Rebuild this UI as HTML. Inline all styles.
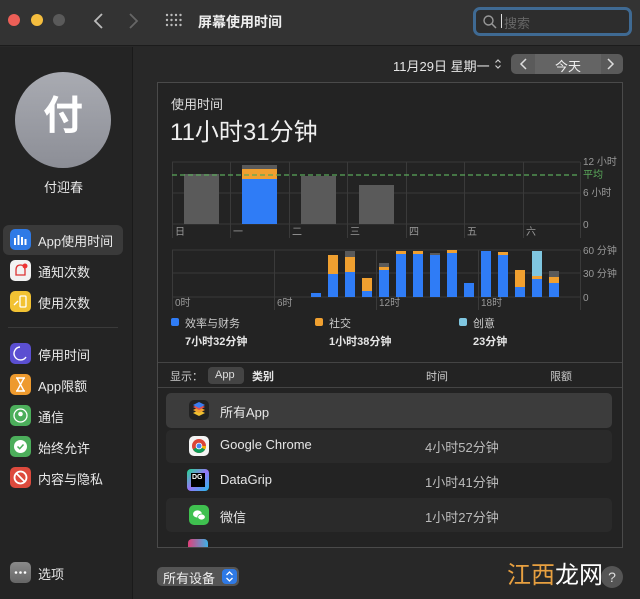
<!DOCTYPE html>
<html><head><meta charset="utf-8"><style>
*{margin:0;padding:0;box-sizing:border-box}
body{width:640px;height:599px;overflow:hidden;background:#282828;font-family:"Liberation Sans","Noto Sans CJK SC",sans-serif;color:#e6e6e6;position:relative}
.a{position:absolute;white-space:nowrap}
.t{font-size:13px}
.s{font-size:11px}
.ic{position:absolute;left:10px;width:21px;height:21px;border-radius:5px}
.mi{position:absolute;left:38px;font-size:13px;color:#e8e8e8}
.row{position:absolute;left:166px;width:446px;border-radius:5px}
</style></head><body>
<!-- title bar -->
<div class="a" style="left:0;top:0;width:640px;height:46px;background:#333;border-bottom:1px solid #1c1c1c"></div>
<div class="a" style="left:8px;top:14px;width:12px;height:12px;border-radius:6px;background:#ec5f57"></div>
<div class="a" style="left:31px;top:14px;width:12px;height:12px;border-radius:6px;background:#f4bd3e"></div>
<div class="a" style="left:53px;top:14px;width:12px;height:12px;border-radius:6px;background:#5a5a5a"></div>
<svg class="a" style="left:90px;top:12px" width="60" height="18"><path d="M12 2 L5 9 L12 16" stroke="#bbb" stroke-width="1.8" fill="none"/><path d="M40 2 L47 9 L40 16" stroke="#666" stroke-width="1.8" fill="none"/></svg>
<svg class="a" style="left:165px;top:13px" width="18" height="14"><g fill="#bbb"><circle cx="2" cy="2" r="1.2"/><circle cx="6.5" cy="2" r="1.2"/><circle cx="11" cy="2" r="1.2"/><circle cx="15.5" cy="2" r="1.2"/><circle cx="2" cy="7" r="1.2"/><circle cx="6.5" cy="7" r="1.2"/><circle cx="11" cy="7" r="1.2"/><circle cx="15.5" cy="7" r="1.2"/><circle cx="2" cy="12" r="1.2"/><circle cx="6.5" cy="12" r="1.2"/><circle cx="11" cy="12" r="1.2"/><circle cx="15.5" cy="12" r="1.2"/></g></svg>
<div class="a" style="left:198px;top:12px;font-size:14px;font-weight:bold;color:#eee">屏幕使用时间</div>
<div class="a" style="left:473px;top:7px;width:159px;height:29px;border:3px solid #3f6a93;border-radius:7px;background:#2d2d2d"></div>
<svg class="a" style="left:482px;top:14px" width="16" height="16"><circle cx="6.5" cy="6.5" r="4.5" stroke="#999" stroke-width="1.4" fill="none"/><path d="M10 10 L14 14" stroke="#999" stroke-width="1.5"/></svg>
<div class="a" style="left:501px;top:14px;width:1px;height:14px;background:#ddd"></div>
<div class="a t" style="left:504px;top:13px;color:#666">搜索</div>
<!-- sidebar -->
<div class="a" style="left:0;top:47px;width:133px;height:552px;background:#242424;border-right:1px solid #1a1a1a"></div>
<div class="a" style="left:15px;top:72px;width:96px;height:96px;border-radius:50%;background:linear-gradient(#a9abb2,#8c8e96)"></div>
<div class="a" style="left:15px;top:92px;width:96px;text-align:center;font-size:40px;line-height:48px;color:#fff;font-weight:bold">付</div>
<div class="a t" style="left:44px;top:177px">付迎春</div>
<div class="a" style="left:3px;top:225px;width:120px;height:30px;border-radius:6px;background:#3a3a3a"></div>
<div class="ic" style="top:229px;background:#2f7ae6"><svg width="21" height="21"><g fill="#fff"><rect x="4" y="9" width="2" height="7"/><rect x="7.5" y="6" width="2" height="10"/><rect x="11" y="8" width="2" height="8"/><rect x="14.5" y="10" width="2" height="6"/></g></svg></div>
<div class="mi" style="top:231px">App使用时间</div>
<div class="ic" style="top:260px;background:#f2f2f2"><svg width="21" height="21"><path d="M6 15 L6 10 Q6 5 10.5 5 Q15 5 15 10 L15 15 Z" fill="none" stroke="#d33" stroke-width="1.3"/><circle cx="15" cy="6" r="2.5" fill="#e33"/></svg></div>
<div class="mi" style="top:262px">通知次数</div>
<div class="ic" style="top:291px;background:#f2c233"><svg width="21" height="21"><rect x="10" y="5" width="6" height="11" rx="1" fill="none" stroke="#fff" stroke-width="1.3"/><path d="M4 14 L8 10" stroke="#fff" stroke-width="1.3"/></svg></div>
<div class="mi" style="top:293px">使用次数</div>
<div class="a" style="left:8px;top:327px;width:110px;height:1px;background:#3a3a3a"></div>
<div class="ic" style="top:343px;background:#5b4fd1"><svg width="21" height="21"><path d="M10 4 A6.5 6.5 0 1 0 16 14" fill="none" stroke="#fff" stroke-width="1.4"/></svg></div>
<div class="mi" style="top:345px">停用时间</div>
<div class="ic" style="top:374px;background:#ee9a2e"><svg width="21" height="21"><path d="M6 4 H15 M6 17 H15 M7 4 L14 17 M14 4 L7 17" stroke="#fff" stroke-width="1.4" fill="none"/></svg></div>
<div class="mi" style="top:376px">App限额</div>
<div class="ic" style="top:405px;background:#4cae5b"><svg width="21" height="21"><circle cx="10.5" cy="10.5" r="6.5" fill="none" stroke="#fff" stroke-width="1.3"/><circle cx="10.5" cy="9" r="2.3" fill="#fff"/></svg></div>
<div class="mi" style="top:407px">通信</div>
<div class="ic" style="top:436px;background:#4cae5b"><svg width="21" height="21"><circle cx="10.5" cy="10.5" r="6.5" fill="#fff"/><path d="M7.5 10.5 L9.7 12.7 L13.5 8.5" stroke="#4cae5b" stroke-width="1.5" fill="none"/></svg></div>
<div class="mi" style="top:438px">始终允许</div>
<div class="ic" style="top:467px;background:#dd4a3d"><svg width="21" height="21"><circle cx="10.5" cy="10.5" r="6" fill="none" stroke="#fff" stroke-width="1.8"/><path d="M6.3 6.3 L14.7 14.7" stroke="#fff" stroke-width="1.8"/></svg></div>
<div class="mi" style="top:469px">内容与隐私</div>
<div class="ic" style="top:562px;background:linear-gradient(#8a8a8a,#666)"><svg width="21" height="21"><g fill="#fff"><circle cx="6" cy="10.5" r="1.3"/><circle cx="10.5" cy="10.5" r="1.3"/><circle cx="15" cy="10.5" r="1.3"/></g></svg></div>
<div class="mi" style="top:564px">选项</div>
<!-- date nav -->
<div class="a t" style="left:393px;top:56px">11月29日 星期一</div>
<svg class="a" style="left:494px;top:58px" width="8" height="12"><path d="M1.5 4.5 L4 2 L6.5 4.5 M1.5 7.5 L4 10 L6.5 7.5" stroke="#ccc" stroke-width="1.2" fill="none"/></svg>
<div class="a" style="left:511px;top:54px;width:112px;height:20px;border-radius:5px;background:#5a5a5a"></div>
<div class="a" style="left:535px;top:54px;width:66px;height:20px;background:#646464"></div>
<svg class="a" style="left:511px;top:54px" width="112" height="20"><path d="M15 5 L10 10 L15 15" stroke="#ddd" stroke-width="1.5" fill="none"/><path d="M97 5 L102 10 L97 15" stroke="#ddd" stroke-width="1.5" fill="none"/></svg>
<div class="a t" style="left:555px;top:56px;color:#eee">今天</div>
<!-- panel -->
<div class="a" style="left:157px;top:82px;width:466px;height:466px;background:#232323;border:1px solid #4a4a4a"></div>
<div class="a t" style="left:171px;top:94px;color:#ddd">使用时间</div>
<div class="a" style="left:170px;top:112px;font-size:24px;color:#f0f0f0">11小时31分钟</div>
<svg class="a" style="left:160px;top:150px" width="462" height="200">
<g stroke="#3a3a3a" stroke-width="1">
<line x1="12" y1="12" x2="420" y2="12"/><line x1="12" y1="74" x2="420" y2="74"/>
<line x1="12" y1="43" x2="420" y2="43"/>
<line x1="12" y1="100" x2="420" y2="100"/><line x1="12" y1="147" x2="420" y2="147"/><line x1="12" y1="123" x2="420" y2="123"/>
<line x1="12.5" y1="12" x2="12.5" y2="88"/><line x1="70.5" y1="12" x2="70.5" y2="88"/><line x1="129.5" y1="12" x2="129.5" y2="88"/><line x1="187.5" y1="12" x2="187.5" y2="88"/><line x1="246.5" y1="12" x2="246.5" y2="88"/><line x1="304.5" y1="12" x2="304.5" y2="88"/><line x1="363.5" y1="12" x2="363.5" y2="88"/><line x1="420.5" y1="12" x2="420.5" y2="88"/>
<line x1="12.5" y1="100" x2="12.5" y2="160"/><line x1="114.5" y1="100" x2="114.5" y2="160"/><line x1="216.5" y1="100" x2="216.5" y2="160"/><line x1="318.5" y1="100" x2="318.5" y2="160"/><line x1="420.5" y1="100" x2="420.5" y2="160"/>
</g>
<rect x="24" y="24" width="35" height="50" fill="#5a5a5a"/>
<rect x="82" y="15" width="35" height="4" fill="#5a5a5a"/>
<rect x="82" y="19" width="35" height="10" fill="#f0a030"/>
<rect x="82" y="29" width="35" height="45" fill="#2f7cf6"/>
<rect x="141" y="26" width="35" height="48" fill="#5a5a5a"/>
<rect x="199" y="35" width="35" height="39" fill="#5a5a5a"/>
<line x1="12" y1="25" x2="420" y2="25" stroke="#5aa85a" stroke-width="1.2" stroke-dasharray="5,3"/>
<g fill="#999" font-size="10" font-family="Liberation Sans,Noto Sans CJK SC,sans-serif">
<text x="15" y="85">日</text><text x="73" y="85">一</text><text x="132" y="85">二</text><text x="190" y="85">三</text><text x="249" y="85">四</text><text x="307" y="85">五</text><text x="366" y="85">六</text>
<text x="423" y="15">12 小时</text><text x="423" y="46">6 小时</text><text x="423" y="78">0</text>
<text x="423" y="104">60 分钟</text><text x="423" y="127">30 分钟</text><text x="423" y="151">0</text>
<text x="15" y="156">0时</text><text x="117" y="156">6时</text><text x="219" y="156">12时</text><text x="321" y="156">18时</text>
</g>
<text x="423" y="28" fill="#5aa85a" font-size="10" font-family="Noto Sans CJK SC,sans-serif">平均</text>
<g>
<rect x="151" y="143" width="10" height="4" fill="#2f7cf6"/>
<rect x="168" y="124" width="10" height="23" fill="#2f7cf6"/><rect x="168" y="105" width="10" height="19" fill="#f0a030"/>
<rect x="185" y="122" width="10" height="25" fill="#2f7cf6"/><rect x="185" y="107" width="10" height="15" fill="#f0a030"/><rect x="185" y="101" width="10" height="6" fill="#5a5a5a"/>
<rect x="202" y="141" width="10" height="6" fill="#2f7cf6"/><rect x="202" y="128" width="10" height="13" fill="#f0a030"/>
<rect x="219" y="120" width="10" height="27" fill="#2f7cf6"/><rect x="219" y="117" width="10" height="3" fill="#f0a030"/><rect x="219" y="113" width="10" height="4" fill="#5a5a5a"/>
<rect x="236" y="104" width="10" height="43" fill="#2f7cf6"/><rect x="236" y="101" width="10" height="3" fill="#f0a030"/>
<rect x="253" y="104" width="10" height="43" fill="#2f7cf6"/><rect x="253" y="101" width="10" height="3" fill="#f0a030"/>
<rect x="270" y="105" width="10" height="42" fill="#2f7cf6"/><rect x="270" y="103" width="10" height="2" fill="#5a5a5a"/>
<rect x="287" y="103" width="10" height="44" fill="#2f7cf6"/><rect x="287" y="100" width="10" height="3" fill="#f0a030"/>
<rect x="304" y="133" width="10" height="14" fill="#2f7cf6"/>
<rect x="321" y="101" width="10" height="46" fill="#2f7cf6"/>
<rect x="338" y="105" width="10" height="42" fill="#2f7cf6"/><rect x="338" y="102" width="10" height="3" fill="#f0a030"/>
<rect x="355" y="137" width="10" height="10" fill="#2f7cf6"/><rect x="355" y="120" width="10" height="17" fill="#f0a030"/>
<rect x="372" y="129" width="10" height="18" fill="#2f7cf6"/><rect x="372" y="126" width="10" height="3" fill="#f0a030"/><rect x="372" y="101" width="10" height="25" fill="#7fc6e0"/>
<rect x="389" y="133" width="10" height="14" fill="#2f7cf6"/><rect x="389" y="127" width="10" height="6" fill="#f0a030"/><rect x="389" y="121" width="10" height="6" fill="#5a5a5a"/>
</g>
</svg>
<div class="a" style="left:171px;top:318px;width:8px;height:8px;border-radius:2px;background:#2f7cf6"></div>
<div class="a s" style="left:185px;top:315px;color:#ccc">效率与财务</div>
<div class="a" style="left:315px;top:318px;width:8px;height:8px;border-radius:2px;background:#f0a030"></div>
<div class="a s" style="left:329px;top:315px;color:#ccc">社交</div>
<div class="a" style="left:459px;top:318px;width:8px;height:8px;border-radius:2px;background:#7fc6e0"></div>
<div class="a s" style="left:473px;top:315px;color:#ccc">创意</div>
<div class="a s" style="left:185px;top:333px;font-weight:bold">7小时32分钟</div>
<div class="a s" style="left:329px;top:333px;font-weight:bold">1小时38分钟</div>
<div class="a s" style="left:473px;top:333px;font-weight:bold">23分钟</div>
<div class="a" style="left:158px;top:362px;width:464px;height:1px;background:#444"></div>
<div class="a" style="left:158px;top:387px;width:464px;height:1px;background:#444"></div>
<div class="a s" style="left:170px;top:368px;color:#ccc">显示：</div>
<div class="a" style="left:208px;top:367px;width:36px;height:17px;border-radius:4px;background:#444"></div>
<div class="a s" style="left:215px;top:369px;color:#ddd">App</div>
<div class="a s" style="left:252px;top:368px;font-weight:bold">类别</div>
<div class="a s" style="left:426px;top:368px;color:#ccc">时间</div>
<div class="a s" style="left:550px;top:368px;color:#ccc">限额</div>
<div class="row" style="top:393px;height:35px;background:#3c3c3c"></div>
<div class="row" style="top:430px;height:33px;background:#2a2a2a"></div>
<div class="row" style="top:498px;height:34px;background:#2a2a2a"></div>
<div class="a" style="left:189px;top:400px;width:20px;height:20px;border-radius:5px;background:#222"><svg width="20" height="20"><path d="M10 16 L4 13 L10 10 L16 13Z" fill="#f0c030"/><path d="M10 13 L4 10 L10 7 L16 10Z" fill="#f0a030"/><path d="M10 10 L4 7 L10 4 L16 7Z" fill="#e05050"/><path d="M10 8 L4 5 L10 2 L16 5Z" fill="#3d7cf0"/></svg></div>
<div class="a t" style="left:220px;top:402px">所有App</div>
<div class="a" style="left:189px;top:436px;width:20px;height:20px;border-radius:5px;background:#f4f4f4"><svg width="20" height="20"><circle cx="10" cy="10" r="7" fill="#db4437"/><path d="M10 10 L16.1 13.5 A7 7 0 0 1 4 13.5Z" fill="#0f9d58"/><path d="M10 10 L17 10 A7 7 0 0 1 16.1 13.5Z" fill="#f4b400"/><circle cx="10" cy="10" r="3.3" fill="#fff"/><circle cx="10" cy="10" r="2.5" fill="#4285f4"/></svg></div>
<div class="a t" style="left:220px;top:437px">Google Chrome</div>
<div class="a t" style="left:425px;top:437px;color:#bbb">4小时52分钟</div>
<div class="a" style="left:187px;top:469px;width:22px;height:22px;border-radius:4px;background:linear-gradient(135deg,#22d88f,#9775f8,#23bbea)"></div>
<div class="a" style="left:191px;top:473px;width:14px;height:14px;background:#000;color:#fff;font-size:7px;font-weight:bold;padding:1px">DG</div>
<div class="a t" style="left:220px;top:472px">DataGrip</div>
<div class="a t" style="left:425px;top:472px;color:#bbb">1小时41分钟</div>
<div class="a" style="left:189px;top:505px;width:20px;height:20px;border-radius:5px;background:#3fc04f"><svg width="20" height="20"><ellipse cx="8.5" cy="9" rx="4.5" ry="3.6" fill="#fff"/><ellipse cx="12.5" cy="12" rx="3.8" ry="3" fill="#fff" stroke="#3fc04f" stroke-width=".8"/></svg></div>
<div class="a t" style="left:220px;top:507px">微信</div>
<div class="a t" style="left:425px;top:507px;color:#bbb">1小时27分钟</div>
<div class="a" style="left:188px;top:539px;width:20px;height:8px;background:linear-gradient(90deg,#e0407a,#3db0e6);border-radius:4px 4px 0 0"></div>
<!-- bottom -->
<div class="a" style="left:157px;top:567px;width:82px;height:19px;border-radius:5px;background:#555"></div>
<div class="a t" style="left:163px;top:568px;color:#eee">所有设备</div>
<div class="a" style="left:222px;top:569px;width:15px;height:15px;border-radius:4px;background:#2f7ae6"></div>
<svg class="a" style="left:222px;top:569px" width="15" height="15"><path d="M4.5 6 L7.5 3 L10.5 6 M4.5 9 L7.5 12 L10.5 9" stroke="#fff" stroke-width="1.3" fill="none"/></svg>
<div class="a" style="left:507px;top:555px;font-size:24px;color:#fff;font-family:'Noto Sans CJK SC',sans-serif"><span style="color:#e8a040">江西</span>龙网</div>
<div class="a" style="left:601px;top:566px;width:22px;height:22px;border-radius:50%;background:#555;color:#ddd;font-size:14px;text-align:center;line-height:22px">?</div>
</body></html>
